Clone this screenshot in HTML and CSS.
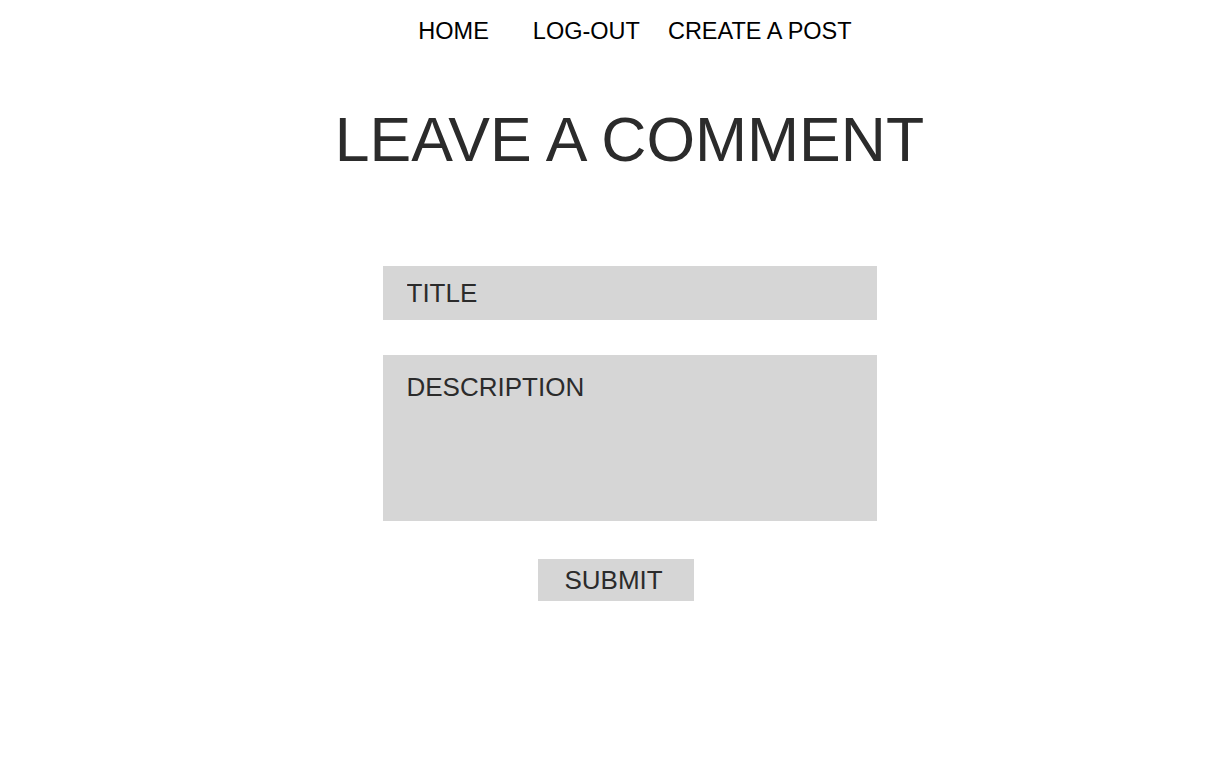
FILE: index.html
```html
<!DOCTYPE html>
<html lang="en">
<head>
<meta charset="utf-8">
<title>Leave a comment</title>
<link rel="stylesheet" href="styles.css">
</head>
<body>
<nav class="nav">
  <a class="nav-link" href="#">HOME</a>
  <a class="nav-link nav-logout" href="#">LOG-OUT</a>
  <a class="nav-link nav-create" href="#">CREATE A POST</a>
</nav>
<main class="main">
  <h1 class="heading">LEAVE A COMMENT</h1>
  <form class="form">
    <input class="field field-title" type="text" placeholder="TITLE">
    <textarea class="field field-desc" placeholder="DESCRIPTION"></textarea>
    <button class="submit" type="button">SUBMIT</button>
  </form>
</main>
</body>
</html>
```
FILE: styles.css
```css
html, body {
  margin: 0;
  padding: 0;
  background: #ffffff;
}

body {
  font-family: "Liberation Sans", Arial, sans-serif;
  color: #2b2b2b;
}

.nav {
  display: flex;
  justify-content: center;
  padding: 20px 0 0 53px;
  font-size: 23.5px;
  line-height: 1;
}

.nav-link {
  color: #000000;
  text-decoration: none;
}

.nav-logout {
  margin-left: 44px;
}

.nav-create {
  margin-left: 28px;
}

.main {
  display: flex;
  flex-direction: column;
  align-items: center;
  padding-left: 42px;
}

.heading {
  margin: 64px 0 0;
  font-size: 62.5px;
  line-height: 1;
  font-weight: 400;
  color: #2b2b2b;
}

.form {
  display: flex;
  flex-direction: column;
  width: 494px;
  margin-top: 96px;
}

.field {
  box-sizing: border-box;
  width: 100%;
  border: none;
  outline: none;
  background: #d6d6d6;
  font-family: "Liberation Sans", Arial, sans-serif;
  font-size: 26px;
  line-height: 1;
  color: #2b2b2b;
  padding: 0 24px;
  margin: 0;
  border-radius: 0;
}

.field::placeholder {
  color: #2b2b2b;
  opacity: 1;
}

.field-title {
  height: 54px;
  padding-top: 14px;
  padding-bottom: 14px;
}

.field-desc {
  height: 166px;
  margin-top: 35px;
  padding-top: 19px;
  resize: none;
  display: block;
}

.submit {
  box-sizing: border-box;
  align-self: flex-start;
  margin: 38px 0 0 155px;
  width: 156px;
  height: 42px;
  padding: 8px 0 8px 27px;
  border: none;
  border-radius: 0;
  background: #d6d6d6;
  font-family: "Liberation Sans", Arial, sans-serif;
  font-size: 26px;
  line-height: 1;
  color: #2b2b2b;
  text-align: left;
  cursor: pointer;
}
```
